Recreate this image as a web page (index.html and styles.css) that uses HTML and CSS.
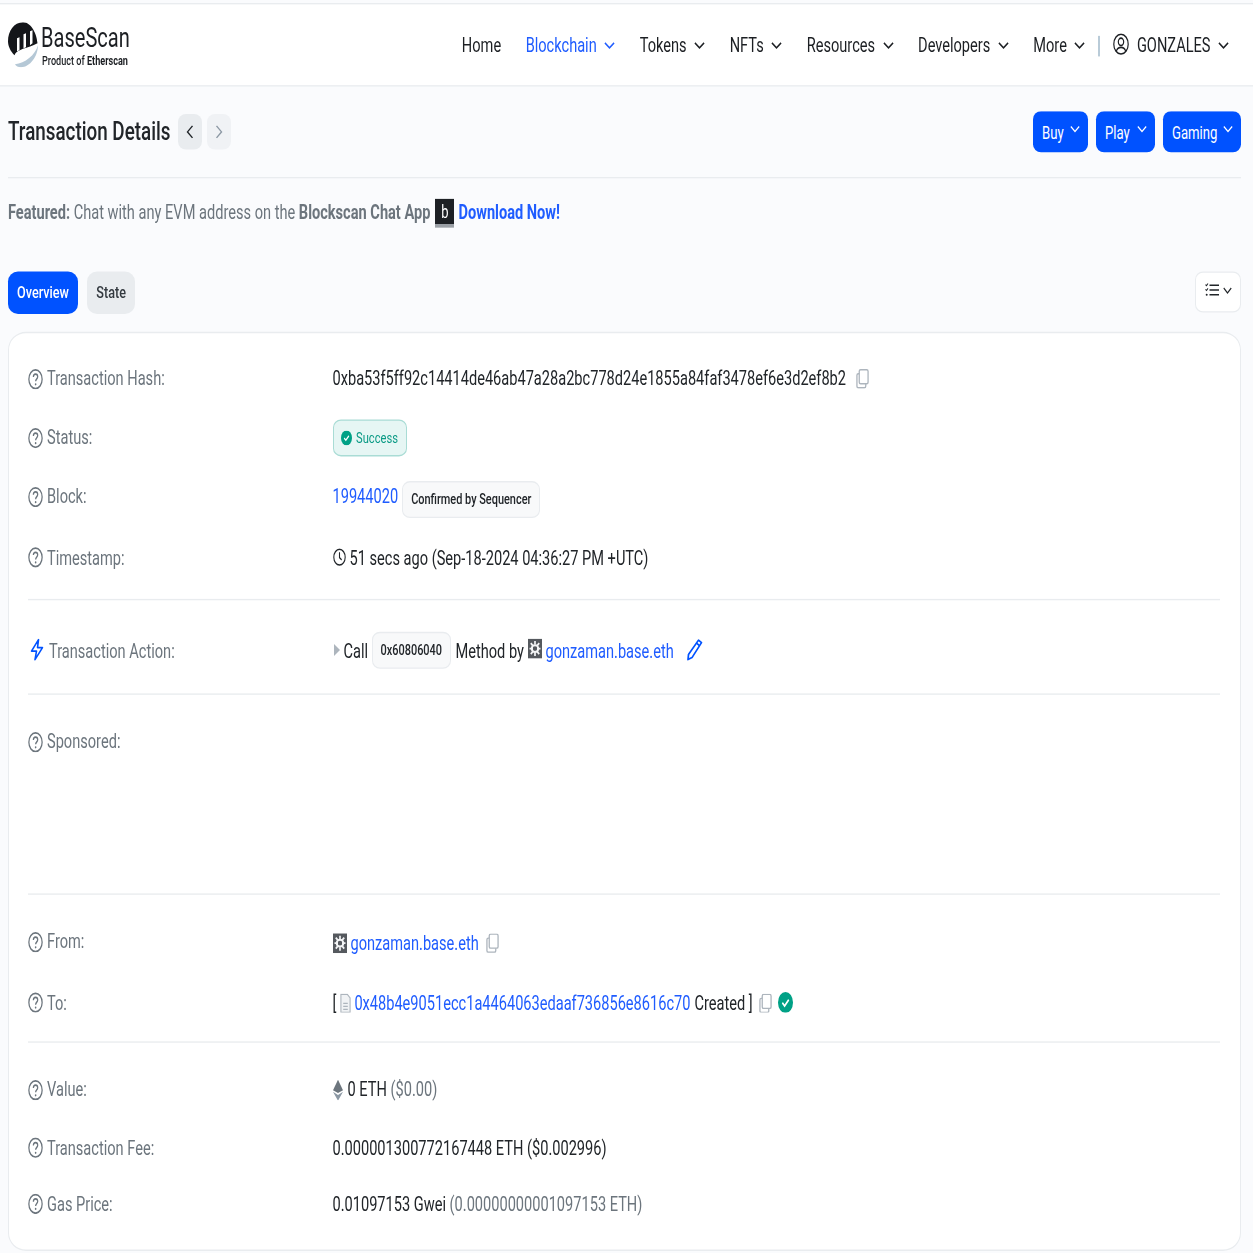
FILE: index.html
```html
<!DOCTYPE html>
<html lang="en">
<head>
<meta charset="utf-8">
<title>BaseScan Transaction Details</title>
<link rel="stylesheet" href="styles.css">
</head>
<body>
<svg class="defs" aria-hidden="true">
  <symbol id="chev" viewBox="0 0 12 8" preserveAspectRatio="none"><path d="M1 1.5 6 6.5 11 1.5" fill="none" stroke="currentColor" stroke-width="1.5"/></symbol>
  <symbol id="q" viewBox="0 0 24 24" preserveAspectRatio="none"><circle cx="12" cy="12" r="10.6" fill="none" stroke="currentColor" stroke-width="2"/><path d="M8.6 9.4c0-2 1.5-3.2 3.5-3.2s3.4 1.2 3.4 2.9c0 2.600-3.300 2.600-3.300 5.300" fill="none" stroke="currentColor" stroke-width="2"/><circle cx="12.200" cy="17.800" r="1.300" fill="currentColor"/></symbol>
  <symbol id="copy" viewBox="0 0 14 20" preserveAspectRatio="none"><path d="M5 1h6.500a1.500 1.500 0 0 1 1.500 1.500v11a1.500 1.500 0 0 1-1.500 1.500H5a1.500 1.500 0 0 1-1.500-1.500v-11A1.500 1.500 0 0 1 5 1Z" fill="none" stroke="currentColor" stroke-width="1.400"/><path d="M3.500 5H2.500A1.500 1.500 0 0 0 1 6.500v11A1.500 1.500 0 0 0 2.500 19h6.500A1.500 1.500 0 0 0 10.500 17.500V15" fill="none" stroke="currentColor" stroke-width="1.400"/></symbol>
  <symbol id="check" viewBox="0 0 20 20" preserveAspectRatio="none"><circle cx="10" cy="10" r="10" fill="#00a186"/><path d="M5.800 10.300 8.800 13.200 14.300 7.300" fill="none" stroke="#fff" stroke-width="2"/></symbol>
  <symbol id="gear" viewBox="0 0 14 20" preserveAspectRatio="none"><rect width="14" height="20" fill="#55595e"/><circle cx="7" cy="10" r="3.300" fill="none" stroke="#f4f5f6" stroke-width="2"/><path d="M7 2.500v3.500M7 14v3.500M1.500 10h3.500M9 10h3.500M2.800 4.500l2 2.500M9.200 13l2 2.500M11.200 4.500l-2 2.500M4.800 13l-2 2.500" stroke="#f4f5f6" stroke-width="1.700"/></symbol>
</svg>
<div class="page">
  <header class="topbar">
    <a class="logo">
      <svg class="logo-mark" viewBox="0 0 30 45" preserveAspectRatio="none">
        <path d="M29.500 21C29 13 24 0 15 0 6 0 0 9 0 19c0 5 2.500 10 6.500 14C8 27 20 26 29.500 21Z" fill="#14161a"/>
        <path d="M30 23C30 34 22 45 13 45 10 45 8 44 7 42 17 41 27 33 30 23Z" fill="#b5c8d6"/>
        <path d="M9 29V16l2.500-1v13ZM15.500 26V12l2.500-1v14ZM22 23V9l2.500-1v13Z" fill="#fff"/>
      </svg>
      <span class="logo-text">
        <span class="logo-name">BaseScan</span>
        <span class="logo-sub">Product of <b>Etherscan</b></span>
      </span>
    </a>
    <nav class="nav">
      <a class="nav-item">Home</a>
      <a class="nav-item active">Blockchain<svg class="chev"><use href="#chev"/></svg></a>
      <a class="nav-item">Tokens<svg class="chev"><use href="#chev"/></svg></a>
      <a class="nav-item">NFTs<svg class="chev"><use href="#chev"/></svg></a>
      <a class="nav-item">Resources<svg class="chev"><use href="#chev"/></svg></a>
      <a class="nav-item">Developers<svg class="chev"><use href="#chev"/></svg></a>
      <a class="nav-item">More<svg class="chev"><use href="#chev"/></svg></a>
      <span class="nav-sep"></span>
      <a class="nav-item user">
        <svg class="user-icon" viewBox="0 0 24 24" preserveAspectRatio="none"><circle cx="12" cy="12" r="10.800" fill="none" stroke="currentColor" stroke-width="1.800"/><circle cx="12" cy="9.500" r="4" fill="none" stroke="currentColor" stroke-width="1.800"/><path d="M5 19.500c1.500-3 4-4 7-4s5.500 1 7 4" fill="none" stroke="currentColor" stroke-width="1.800"/></svg>
        GONZALES<svg class="chev"><use href="#chev"/></svg>
      </a>
    </nav>
  </header>

  <main class="main">
    <div class="title-row">
      <div class="title-left">
        <h1 class="title">Transaction Details</h1>
        <span class="pager"><svg viewBox="0 0 8 14" preserveAspectRatio="none"><path d="M6.500 1 1.500 7 6.500 13" fill="none" stroke="#212529" stroke-width="1.400"/></svg></span>
        <span class="pager dim"><svg viewBox="0 0 8 14" preserveAspectRatio="none"><path d="M1.500 1 6.500 7 1.500 13" fill="none" stroke="#8c98a4" stroke-width="1.400"/></svg></span>
      </div>
      <div class="title-actions">
        <a class="cta cta-buy">Buy<svg class="chev"><use href="#chev"/></svg></a>
        <a class="cta cta-play">Play<svg class="chev"><use href="#chev"/></svg></a>
        <a class="cta cta-gaming">Gaming<svg class="chev"><use href="#chev"/></svg></a>
      </div>
    </div>

    <p class="featured"><b>Featured:</b> Chat with any EVM address on the <b>Blockscan Chat App</b><span class="bmark">b</span><a class="dl">Download Now!</a></p>

    <div class="tabs">
      <div class="tab-list">
        <a class="tab on">Overview</a>
        <a class="tab">State</a>
      </div>
      <button class="opts" type="button">
        <svg class="opts-icon" viewBox="0 0 14 14" preserveAspectRatio="none"><path d="M4.500 2.500H14M4.500 7H14M4.500 11.500H14" stroke="#212529" stroke-width="1.400"/><path d="M.5 2 1.500 3 3 1M.5 6.500 1.500 7.500 3 5.500" fill="none" stroke="#212529" stroke-width="1"/><circle cx="1.700" cy="11.500" r="1" fill="#212529"/></svg>
        <svg class="chev"><use href="#chev"/></svg>
      </button>
    </div>

    <section class="card">
      <div class="group g-1">
        <div class="row">
          <div class="label"><svg class="q"><use href="#q"/></svg>Transaction Hash:</div>
          <div class="value">0xba53f5ff92c14414de46ab47a28a2bc778d24e1855a84faf3478ef6e3d2ef8b2<svg class="copy c-hash"><use href="#copy"/></svg></div>
        </div>
        <div class="row">
          <div class="label"><svg class="q"><use href="#q"/></svg>Status:</div>
          <div class="value"><span class="success"><svg class="tick"><use href="#check"/></svg>Success</span></div>
        </div>
        <div class="row">
          <div class="label"><svg class="q"><use href="#q"/></svg>Block:</div>
          <div class="value"><a class="link">19944020</a><span class="chip chip-block">Confirmed by Sequencer</span></div>
        </div>
        <div class="row row-time">
          <div class="label"><svg class="q"><use href="#q"/></svg>Timestamp:</div>
          <div class="value"><svg class="clock" viewBox="0 0 24 24" preserveAspectRatio="none"><circle cx="12" cy="12" r="10.500" fill="none" stroke="currentColor" stroke-width="2"/><path d="M12 5.500V12.500L16 15.500" fill="none" stroke="currentColor" stroke-width="2"/></svg>51 secs ago (Sep-18-2024 04:36:27 PM +UTC)</div>
        </div>
      </div>
      <div class="group g-2">
        <div class="row">
          <div class="label"><svg class="bolt" viewBox="0 0 14 22" preserveAspectRatio="none"><path d="M8.500 1 1.500 12.500H6.500L5 21 12.500 9H7.500Z" fill="none" stroke="#0052ff" stroke-width="1.600" stroke-linejoin="round"/></svg>Transaction Action:</div>
          <div class="value"><svg class="caret" viewBox="0 0 6 12" preserveAspectRatio="none"><path d="M0 0 6 6 0 12Z" fill="#adb5bd"/></svg>Call<span class="chip chip-method">0x60806040</span><span class="method">Method by</span><svg class="gear gear-a"><use href="#gear"/></svg><a class="link">gonzaman.base.eth</a><svg class="pencil" viewBox="0 0 16 22" preserveAspectRatio="none"><path d="M11.500 1.500 14.500 4 5 19 1 21 1.500 16Z" fill="none" stroke="#0052ff" stroke-width="1.700" stroke-linejoin="round"/><path d="M9.500 4.500 12.500 7" stroke="#0052ff" stroke-width="1.700"/></svg></div>
        </div>
      </div>
      <div class="group g-3">
        <div class="label"><svg class="q"><use href="#q"/></svg>Sponsored:</div>
      </div>
      <div class="group g-4">
        <div class="row">
          <div class="label"><svg class="q"><use href="#q"/></svg>From:</div>
          <div class="value nudge"><svg class="gear gear-b"><use href="#gear"/></svg><a class="link">gonzaman.base.eth</a><svg class="copy c-from"><use href="#copy"/></svg></div>
        </div>
        <div class="row row-to">
          <div class="label"><svg class="q"><use href="#q"/></svg>To:</div>
          <div class="value">[<svg class="doc" viewBox="0 0 12 20" preserveAspectRatio="none"><path d="M1 1H8L11 4.500V19H1Z" fill="#f1f3f5" stroke="#adb5bd" stroke-width="1.200"/><path d="M3.500 10H8.500M3.500 13H8.500M3.500 16H8.500" stroke="#adb5bd" stroke-width="1.100"/></svg><a class="link">0x48b4e9051ecc1a4464063edaaf736856e8616c70</a><span class="created">Created ]</span><svg class="copy c-to"><use href="#copy"/></svg><svg class="tick-big"><use href="#check"/></svg></div>
        </div>
      </div>
      <div class="group g-5">
        <div class="row">
          <div class="label"><svg class="q"><use href="#q"/></svg>Value:</div>
          <div class="value"><svg class="eth" viewBox="0 0 10 22" preserveAspectRatio="none"><path d="M5 0 10 11 5 14 0 11Z" fill="#6c757d"/><path d="M5 16 10 12.500 5 22 0 12.500Z" fill="#8c98a4"/></svg>0 ETH <span class="muted">($0.00)</span></div>
        </div>
        <div class="row row-fee">
          <div class="label"><svg class="q"><use href="#q"/></svg>Transaction Fee:</div>
          <div class="value">0.000001300772167448 ETH ($0.002996)</div>
        </div>
        <div class="row row-gas">
          <div class="label"><svg class="q"><use href="#q"/></svg>Gas Price:</div>
          <div class="value">0.01097153 Gwei <span class="muted">(0.00000000001097153 ETH)</span></div>
        </div>
      </div>
    </section>
  </main>
</div>
</body>
</html>
```
FILE: styles.css
```css
/* The design is 1253 wide and stretched vertically: --v converts a final
   on-screen height into the unstretched layout height. */
:root {
  --sy: 1.36986;
  --v: calc(1px / var(--sy));
  --blue: #0052ff;
  --link: #1f5cff;
  --ink: #212529;
  --grey: #6c757d;
  --line: #e9ecef;
}
* { box-sizing: border-box; }
html, body {
  margin: 0;
  padding: 0;
  width: 1253px;
  height: 1253px;
  overflow: hidden;
  background: #fafbfd;
}
body {
  font-family: Roboto, "Liberation Sans", sans-serif;
  font-size: 14.600px;
  color: var(--ink);
}
.defs { position: absolute; width: 0; height: 0; }
a { color: inherit; text-decoration: none; }
svg { display: block; flex: none; }
.page {
  width: 1253px;
  height: calc(1253 * var(--v));
  transform: scaleY(var(--sy));
  transform-origin: 0 0;
}
.chev { width: 11px; height: calc(8 * var(--v)); }

/* header */
.topbar {
  height: calc(84 * var(--v));
  margin-top: calc(4 * var(--v));
  display: flex;
  align-items: center;
  justify-content: space-between;
  padding: calc(1.500 * var(--v)) 24px 0 8px;
  background: #fff;
  border-top: 1px solid var(--line);
  border-bottom: 1px solid var(--line);
}
.logo { display: flex; align-items: flex-start; gap: 3px; }
.logo-mark { width: 30px; height: calc(45 * var(--v)); margin-top: calc(-1 * var(--v)); }
.logo-text { display: flex; flex-direction: column; margin-top: calc(-3 * var(--v)); }
.logo-name { font-size: 20.070px; line-height: calc(33 * var(--v)); color: #1c1f23; }
.logo-sub { font-size: 9.120px; line-height: calc(14 * var(--v)); font-weight: 500; color: #1c1f23; margin-left: 1px; }
.logo-sub b { font-weight: 700; }
.nav { display: flex; align-items: center; gap: 24.500px; font-size: 14.600px; }
.nav-item { display: flex; align-items: center; gap: 7.500px; color: #1c1f23; }
.nav-item.active { color: var(--link); }
.nav-sep { width: 2px; height: calc(20 * var(--v)); background: #b9cbd8; margin: 0 -11.500px; }
.user-icon { width: 16px; height: calc(22 * var(--v)); margin-top: calc(-4 * var(--v)); }

/* title */
.main { padding: calc(24 * var(--v)) 12px 0 8px; }
.title-row {
  height: calc(67 * var(--v));
  display: flex;
  justify-content: space-between;
  align-items: flex-start;
  border-bottom: 1px solid var(--line);
}
.title-left { display: flex; align-items: center; height: calc(42 * var(--v)); }
.title { margin: 0 8px 0 0; padding-top: calc(1 * var(--v)); font-size: 18.830px; font-weight: 500; line-height: calc(42 * var(--v)); color: #212529; }
.pager {
  width: 24px;
  height: calc(36 * var(--v));
  display: flex;
  align-items: center;
  justify-content: center;
  margin-right: 5px;
  background: #e9ecef;
  border-radius: 8px / calc(8 * var(--v));
}
.pager.dim { background: #f0f2f5; }
.pager svg { width: 8px; height: calc(14 * var(--v)); }
.title-actions { display: flex; gap: 8px; }
.cta {
  height: calc(42 * var(--v));
  display: flex;
  align-items: center;
  justify-content: space-between;
  padding: 0 8px 0 9px;
  background: var(--blue);
  color: #fff;
  border-radius: 8px / calc(8 * var(--v));
  font-size: 13.140px;
}
.cta .chev { margin-top: calc(-5 * var(--v)); width: 10px; }
.cta-buy { width: 55px; }
.cta-play { width: 59px; }
.cta-gaming { width: 78px; }

/* featured */
.featured {
  margin: 0;
  height: calc(70 * var(--v));
  display: flex;
  align-items: center;
  color: var(--grey);
  white-space: pre;
}
.featured b { font-weight: 700; }
.bmark {
  width: 19px;
  height: calc(29 * var(--v));
  display: inline-flex;
  align-items: center;
  justify-content: center;
  margin: 0 4px 0 5px;
  padding-bottom: calc(3 * var(--v));
  background: linear-gradient(#1d2024 89%, #9a9fa5 89%);
  color: #fff;
  font-size: 13px;
}
.dl { color: var(--link); font-weight: 700; }

/* tabs */
.tabs {
  margin-top: calc(23 * var(--v));
  height: calc(43 * var(--v));
  display: flex;
  justify-content: space-between;
}
.tab-list { display: flex; gap: 9px; }
.tab {
  padding: 0 9.500px calc(3 * var(--v));
  display: flex;
  align-items: center;
  border-radius: 10px / calc(10 * var(--v));
  background: #e9ecef;
  font-size: 12.630px;
  font-weight: 500;
  color: #343a40;
}
.tab.on { background: var(--blue); color: #fff; padding: 0 9px calc(3 * var(--v)); }
.opts {
  width: 46px;
  height: calc(42 * var(--v));
  display: flex;
  align-items: center;
  justify-content: center;
  gap: 4px;
  padding: 0 0 calc(3 * var(--v));
  background: #fff;
  border: 1px solid var(--line);
  border-radius: 8px / calc(8 * var(--v));
  color: #212529;
}
.opts-icon { width: 14px; height: calc(15 * var(--v)); }
.opts .chev { width: 9px; }

/* card */
.card {
  margin-top: calc(18 * var(--v));
  height: calc(919 * var(--v));
  padding: 0 20px 0 19px;
  background: #fff;
  border: 1px solid var(--line);
  border-radius: 18px / calc(18 * var(--v));
}
.group { border-bottom: 1px solid var(--line); }
.group:last-child { border-bottom: 0; }
.g-1 { height: calc(267 * var(--v)); padding-top: calc(16 * var(--v)); }
.g-2 { height: calc(95 * var(--v)); padding-top: calc(20 * var(--v)); }
.g-3 { height: calc(199 * var(--v)); padding-top: calc(34 * var(--v)); }
.g-4 { height: calc(149 * var(--v)); padding-top: calc(18 * var(--v)); }
.g-5 { padding-top: calc(17 * var(--v)); }
.row { display: grid; grid-template-columns: 304.500px 1fr; align-items: center; height: calc(59 * var(--v)); }
.row-time { height: calc(63 * var(--v)); }
.row-to { margin-top: calc(2 * var(--v)); }
.row-fee { height: calc(55 * var(--v)); margin-top: calc(1 * var(--v)); }
.row-gas { height: calc(57 * var(--v)); }
.g-2 .row { height: calc(60 * var(--v)); }
.label { display: flex; align-items: center; color: var(--grey); }
.value { display: flex; align-items: center; white-space: pre; color: var(--ink); }
.value.nudge { margin-top: calc(3 * var(--v)); }
.q { width: 15px; height: calc(21 * var(--v)); margin-right: 4px; color: var(--grey); }
.link { color: var(--link); }
.muted { color: var(--grey); }
.copy { width: 13px; height: calc(20 * var(--v)); color: #adb5bd; }
.c-hash { margin-left: 10px; }
.c-from { margin-left: 7px; }
.c-to { margin-left: 6px; }
.success {
  height: calc(38 * var(--v));
  width: 74px;
  display: flex;
  align-items: center;
  justify-content: center;
  gap: 4px;
  background: #e6f6f4;
  border: 1px solid #a9dcd5;
  border-radius: 8px / calc(8 * var(--v));
  color: #0a9a85;
  font-size: 11.170px;
}
.tick { width: 11px; height: calc(15 * var(--v)); }
.chip {
  height: calc(36 * var(--v));
  display: flex;
  align-items: center;
  background: #f8f9fa;
  border: 1px solid var(--line);
  border-radius: 8px / calc(8 * var(--v));
  font-size: 10.950px;
  font-weight: 500;
  padding: 0 8px;
}
.chip-block { margin: calc(6 * var(--v)) 0 0 4px; }
.chip-method { margin: 0 4.500px 0 3.500px; }
.clock { width: 13px; height: calc(18 * var(--v)); margin-right: 4px; }
.bolt { width: 14px; height: calc(22 * var(--v)); margin: 0 5px 0 2px; }
.caret { width: 6px; height: calc(12 * var(--v)); margin: 0 4px 0 1px; }
.method { margin-right: 3.500px; }
.gear { width: 14px; height: calc(20 * var(--v)); }
.gear-a { margin: calc(-3 * var(--v)) 4px 0 0; }
.gear-b { margin-right: 4px; }
.pencil { width: 16px; height: calc(22 * var(--v)); margin-left: 13px; }
.doc { width: 11px; height: calc(20 * var(--v)); margin: 0 3px 0 4px; }
.created { margin-left: 4px; }
.tick-big { width: 15px; height: calc(21 * var(--v)); margin-left: 6px; }
.eth { width: 10px; height: calc(21 * var(--v)); margin-right: 5px; }
```
